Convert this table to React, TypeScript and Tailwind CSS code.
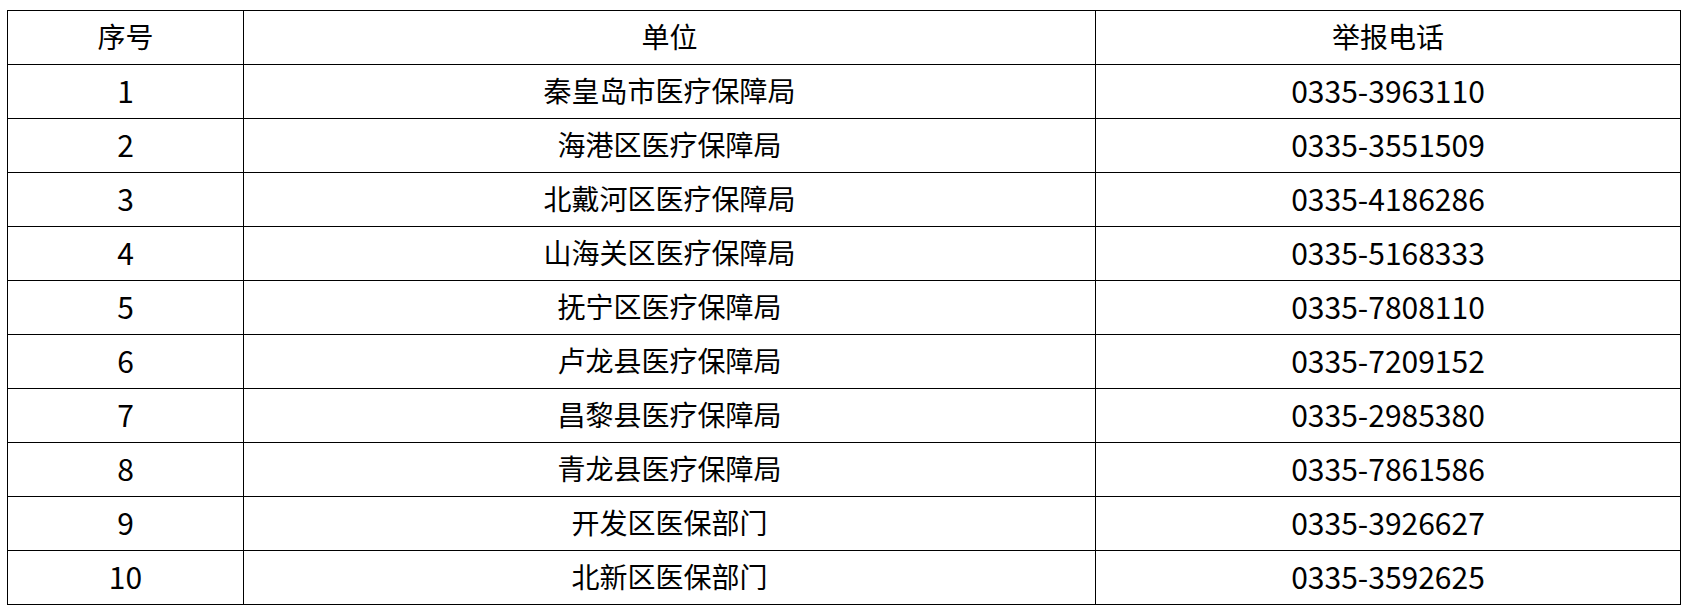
const rows: [string, string][] = [
  ["秦皇岛市医疗保障局", "0335-3963110"],
  ["海港区医疗保障局", "0335-3551509"],
  ["北戴河区医疗保障局", "0335-4186286"],
  ["山海关区医疗保障局", "0335-5168333"],
  ["抚宁区医疗保障局", "0335-7808110"],
  ["卢龙县医疗保障局", "0335-7209152"],
  ["昌黎县医疗保障局", "0335-2985380"],
  ["青龙县医疗保障局", "0335-7861586"],
  ["开发区医保部门", "0335-3926627"],
  ["北新区医保部门", "0335-3592625"],
];

const cell = "h-[54px] border border-black p-0 pb-[4px] text-center align-middle";

export default function App() {
  return (
    <div className="h-[612px] w-[1689px] bg-white pl-[7px] pt-[10px] font-['Noto_Sans_CJK_SC','Noto_Sans',sans-serif] text-[28px] leading-none text-black">
      <table className="w-[1674px] table-fixed border-collapse">
        <colgroup>
          <col className="w-[236px]" />
          <col className="w-[852px]" />
          <col />
        </colgroup>
        <thead>
          <tr>
            <th className={`${cell} font-normal`}>序号</th>
            <th className={`${cell} font-normal`}>单位</th>
            <th className={`${cell} font-normal`}>举报电话</th>
          </tr>
        </thead>
        <tbody>
          {rows.map(([unit, phone], i) => (
            <tr key={phone}>
              <td className={`${cell} text-[30px]`}>{i + 1}</td>
              <td className={cell}>{unit}</td>
              <td className={`${cell} text-[30px]`}>{phone}</td>
            </tr>
          ))}
        </tbody>
      </table>
    </div>
  );
}
